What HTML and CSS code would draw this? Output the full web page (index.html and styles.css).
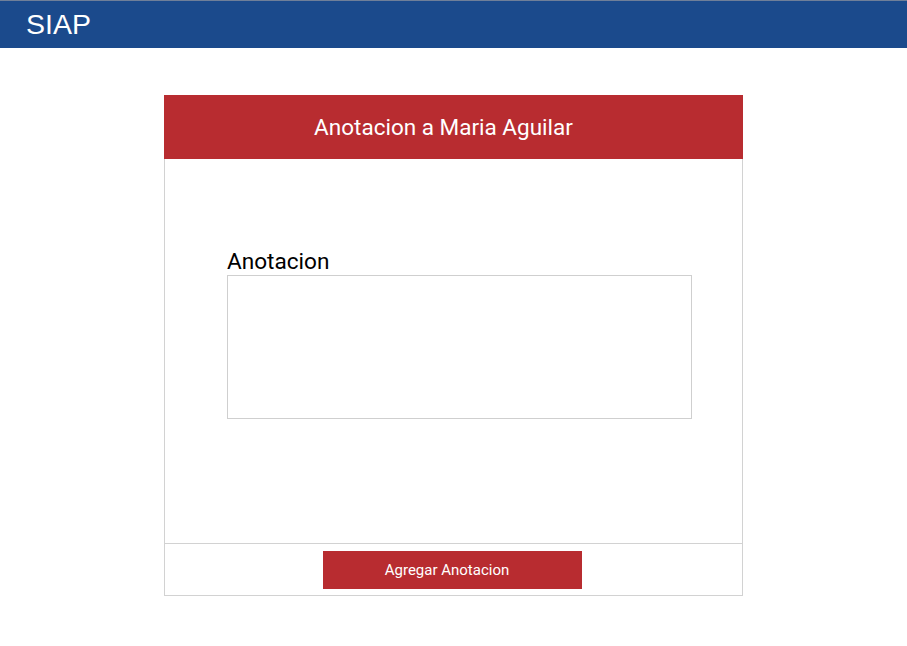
FILE: index.html
```html
<!DOCTYPE html>
<html lang="es">
<head>
<meta charset="utf-8">
<title>SIAP</title>
<link rel="stylesheet" href="styles.css">
</head>
<body>
<header class="topbar"><span class="brand">SIAP</span></header>
<main class="page">
  <section class="card">
    <div class="card-head">Anotacion a Maria Aguilar</div>
    <div class="card-body">
      <label class="field-label" for="nota">Anotacion</label>
      <textarea id="nota" class="field"></textarea>
    </div>
    <div class="card-foot">
      <button class="btn" type="button">Agregar Anotacion</button>
    </div>
  </section>
</main>
</body>
</html>
```
FILE: styles.css
```css
* { box-sizing: border-box; }
html, body { margin: 0; padding: 0; background: #fff; }
body { font-family: Roboto, "Liberation Sans", Arial, sans-serif; }
.topbar {
  height: 48px;
  background: #1b4a8c;
  border-top: 1px solid #6f7f99;
  display: flex;
  align-items: center;
  padding-left: 26px;
}
.brand {
  color: #fff;
  font-family: "Liberation Sans", Arial, sans-serif;
  font-size: 28.5px;
  line-height: 1;
  margin-top: -1px;
}
.page { padding-top: 47px; display: flex; justify-content: center; }
.card {
  width: 579px;
  border: 1px solid #d2d2d2;
  border-top: none;
}
.card-head {
  height: 64px;
  margin: 0 -1px;
  background: #b82c30;
  color: #fff;
  font-size: 22.5px;
  display: flex;
  align-items: center;
  justify-content: center;
  padding-right: 20px;
  padding-bottom: 1px;
}
.card-body {
  height: 384px;
  padding: 90px 0 0 62px;
  display: flex;
  flex-direction: column;
  align-items: flex-start;
}
.field-label {
  font-size: 22.6px;
  line-height: 26px;
  color: #000;
  margin-bottom: 0;
}
.field {
  width: 465px;
  height: 144px;
  border: 1px solid #cfcfcf;
  resize: none;
  margin: 0;
  font: inherit;
}
.card-foot {
  border-top: 1px solid #d2d2d2;
  height: 52px;
  display: flex;
  justify-content: center;
  align-items: flex-start;
  padding-top: 7px;
}
.btn {
  width: 259px;
  height: 38px;
  background: #b82c30;
  color: #fff;
  border: none;
  font-family: Roboto, sans-serif;
  font-size: 15px;
  padding: 0 11px 0 0;
  margin-right: 2px;
}
```
